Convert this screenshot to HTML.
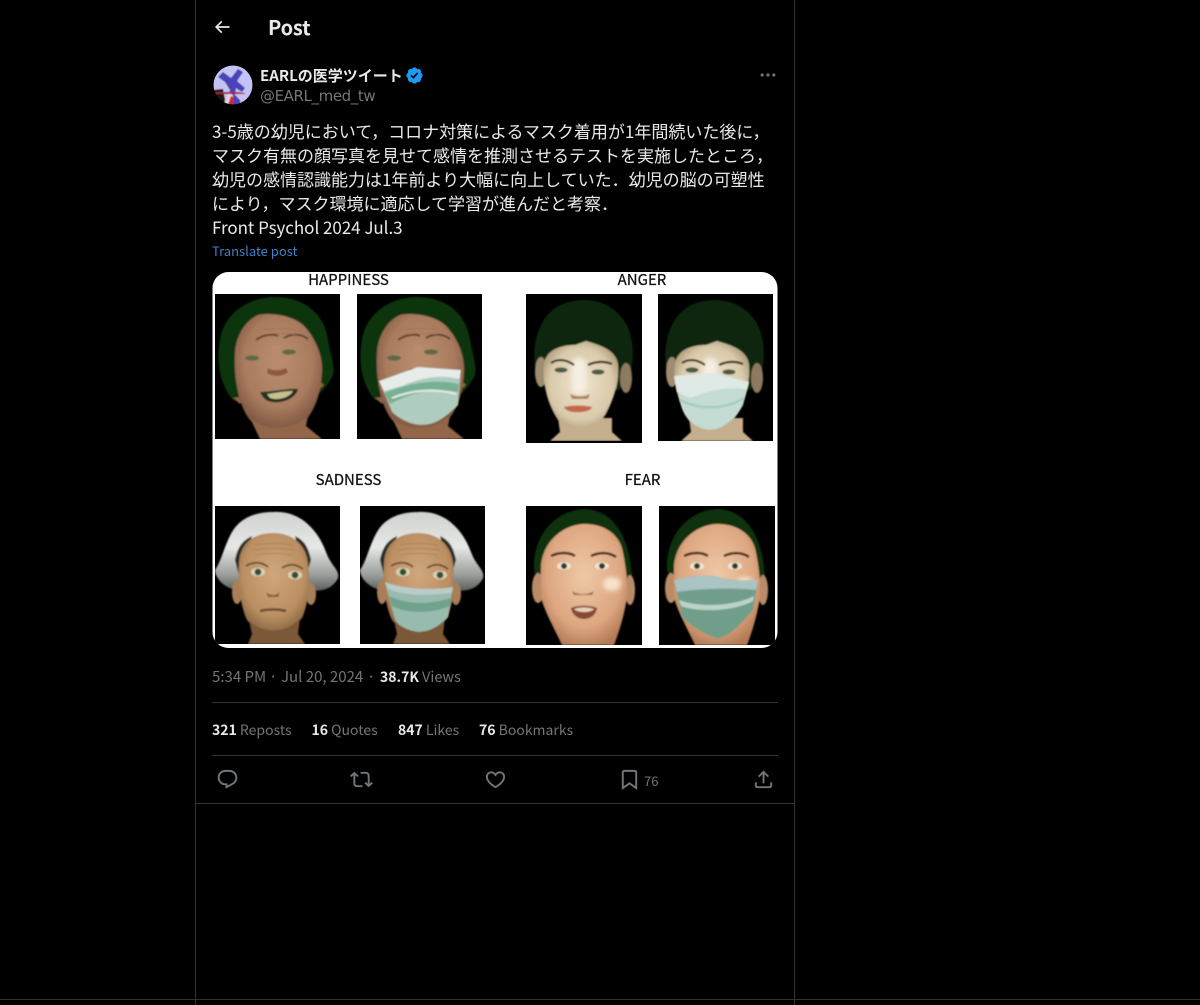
<!DOCTYPE html>
<html lang="ja"><head><meta charset="utf-8"><title>Post</title>
<style>
html,body{margin:0;padding:0;background:#000;}
body{width:1200px;height:1005px;position:relative;overflow:hidden;font-family:"Noto Sans CJK JP","Liberation Sans",sans-serif;color:#e7e9ea;}
.a{position:absolute;white-space:nowrap;}
.ln{position:absolute;background:#333;}
.t{left:212px;font-size:17px;line-height:24px;height:24px;color:#e7e9ea;}
.g{color:#71767b;}
b{font-weight:700;color:#e7e9ea;}
.s{font-size:14px;line-height:20px;top:720px;}
.m{font-size:15px;line-height:20px;top:667px;}
svg.i{position:absolute;fill:#71767b;}
</style></head><body>
<div class="ln" style="left:195px;top:0;width:1px;height:1005px"></div>
<div class="ln" style="left:794px;top:0;width:1px;height:1005px"></div>
<div class="ln" style="left:0;top:999px;width:1200px;height:1px"></div>
<div class="ln" style="left:196px;top:803px;width:598px;height:1px"></div>
<div class="ln" style="left:212px;top:702px;width:566px;height:1px"></div>
<div class="ln" style="left:212px;top:755px;width:566px;height:1px"></div>

<svg class="i" style="left:212px;top:17px;fill:#e7e9ea" width="20" height="20" viewBox="0 0 24 24"><path d="M7.414 13l5.043 5.04-1.414 1.42L3.586 12l7.457-7.46 1.414 1.42L7.414 11H21v2H7.414z"/></svg>
<div class="a" style="left:268px;top:13px;font-size:20px;line-height:28px;font-weight:700;color:#e7e9ea;letter-spacing:-.2px">Post</div>

<svg class="a" style="left:213px;top:65px" width="40" height="40" viewBox="0 0 40 40">
<defs><clipPath id="av"><circle cx="20" cy="20" r="19.5"/></clipPath><filter id="ab"><feGaussianBlur stdDeviation="0.6"/></filter></defs>
<g clip-path="url(#av)"><g filter="url(#ab)">
<rect width="40" height="40" fill="#c4c4f4"/>
<path d="M5 12l5-5 8 6 7-9 5 3-6 9 8 7-3 4-6-4-1 7 5 5 1 8H16l2-7-3-5 2-6-5-8z" fill="#4c43b8"/>
<path d="M0 25l10-1 3 16H0z" fill="#15151f"/>
<path d="M11 38l5-10 4 2-1 10z" fill="#e6d2d8"/>
<path d="M3 27l22 0 7 1v1H14L3 29z" fill="#a82038"/>
<path d="M15 40l3-9 3 2-1 7z" fill="#cc2a2e"/>
</g></g></svg>

<div class="a" style="left:260px;top:65px;font-size:15px;line-height:22px;font-weight:700;color:#e7e9ea">EARLの医学ツイート</div>
<svg class="a" style="left:405px;top:66px;fill:#1d9bf0" width="19" height="19" viewBox="0 0 22 22"><path d="M20.396 11c-.018-.646-.215-1.275-.57-1.816-.354-.54-.852-.972-1.438-1.246.223-.607.27-1.264.14-1.897-.131-.634-.437-1.218-.882-1.687-.47-.445-1.053-.75-1.687-.882-.633-.13-1.29-.083-1.897.14-.273-.587-.704-1.086-1.245-1.44S11.647 1.62 11 1.604c-.646.017-1.273.213-1.813.568s-.969.854-1.24 1.44c-.608-.223-1.267-.272-1.902-.14-.635.13-1.22.436-1.69.882-.445.47-.749 1.055-.878 1.688-.13.633-.08 1.29.144 1.896-.587.274-1.087.705-1.443 1.245-.356.54-.555 1.17-.574 1.817.02.647.218 1.276.574 1.817.356.54.856.972 1.443 1.245-.224.606-.274 1.263-.144 1.896.13.634.433 1.218.877 1.688.47.443 1.054.747 1.687.878.633.132 1.29.084 1.897-.136.274.586.705 1.084 1.246 1.439.54.354 1.17.551 1.816.569.647-.016 1.276-.213 1.817-.567s.972-.854 1.245-1.44c.604.239 1.266.296 1.903.164.636-.132 1.22-.447 1.68-.907.46-.46.776-1.044.908-1.681s.075-1.299-.165-1.903c.586-.274 1.084-.705 1.439-1.246.354-.54.551-1.17.569-1.816zM9.662 14.85l-3.429-3.428 1.293-1.302 2.072 2.072 4.4-4.794 1.347 1.246z"/></svg>
<div class="a g" style="left:260px;top:86px;font-size:15px;line-height:20px;font-family:'DejaVu Sans','Liberation Sans',sans-serif;letter-spacing:-.4px">@EARL_med_tw</div>
<svg class="i" style="left:758px;top:65px" width="20" height="20" viewBox="0 0 24 24"><path d="M3 12c0-1.1.9-2 2-2s2 .9 2 2-.9 2-2 2-2-.9-2-2zm9 2c1.1 0 2-.9 2-2s-.9-2-2-2-2 .9-2 2 .9 2 2 2zm7 0c1.1 0 2-.9 2-2s-.9-2-2-2-2 .9-2 2 .9 2 2 2z"/></svg>

<div class="a t" style="top:119px">3-5歳の幼児において，コロナ対策によるマスク着用が1年間続いた後に，</div>
<div class="a t" style="top:143px">マスク有無の顔写真を見せて感情を推測させるテストを実施したところ，</div>
<div class="a t" style="top:167px">幼児の感情認識能力は1年前より大幅に向上していた．幼児の脳の可塑性</div>
<div class="a t" style="top:191px">により，マスク環境に適応して学習が進んだと考察．</div>
<div class="a t" style="top:215px;letter-spacing:-.04px">Front Psychol 2024 Jul.3</div>
<div class="a" style="left:212px;top:242px;font-size:13px;line-height:18px;color:#4080c8">Translate post</div>

<svg class="a" style="left:212px;top:272px" width="566" height="377" viewBox="212 272 566 377">
<defs>
<clipPath id="c"><rect x="212.5" y="272" width="565" height="376" rx="16"/></clipPath>
<filter id="b" x="-5%" y="-5%" width="110%" height="110%"><feGaussianBlur stdDeviation="0.8"/></filter>
<filter id="b2" x="-40%" y="-40%" width="180%" height="180%"><feGaussianBlur stdDeviation="2.4"/></filter>
<radialGradient id="s1" cx="50%" cy="42%" r="60%"><stop offset="0" stop-color="#bb8f72"/><stop offset=".65" stop-color="#a97b5e"/><stop offset="1" stop-color="#7d5540"/></radialGradient>
<radialGradient id="s2" cx="50%" cy="50%" r="60%"><stop offset="0" stop-color="#efe4cd"/><stop offset=".7" stop-color="#d9caab"/><stop offset="1" stop-color="#a4906f"/></radialGradient>
<radialGradient id="s3" cx="50%" cy="42%" r="62%"><stop offset="0" stop-color="#d0a67c"/><stop offset=".7" stop-color="#bb8f62"/><stop offset="1" stop-color="#8a6642"/></radialGradient>
<radialGradient id="s4" cx="50%" cy="42%" r="62%"><stop offset="0" stop-color="#eec9a6"/><stop offset=".7" stop-color="#dda680"/><stop offset="1" stop-color="#b27a55"/></radialGradient>
<linearGradient id="hg" x1="0" y1="0" x2="0" y2="1"><stop offset="0" stop-color="#cfd2cf"/><stop offset=".45" stop-color="#e6e8e6"/><stop offset=".8" stop-color="#9a9e9a"/><stop offset="1" stop-color="#5b5f5b"/></linearGradient>
<clipPath id="p1"><rect x="215" y="294" width="125" height="145"/></clipPath>
<clipPath id="p2"><rect x="526" y="294" width="116" height="147"/></clipPath>
<clipPath id="p3"><rect x="215" y="506" width="125" height="138"/></clipPath>
<clipPath id="p4"><rect x="526" y="506" width="116" height="139"/></clipPath>

<g id="f1" filter="url(#b)">
<path d="M233 400C220 385 216 362 220 340C224 312 250 297 275 297C305 297 325 315 328 340C330 352 335 365 333 375C328 385 322 392 316 396Z" fill="#0d3410"/>
<path d="M233 398l7 6 6-8zM324 385l-8 7 2-12z" fill="#8f6047"/>
<path d="M235 352C236 335 246 320 258 315C272 312 296 316 306 328C316 340 323 356 322 372C321 392 316 408 306 420C292 432 262 432 250 420C240 408 233 380 235 352Z" fill="url(#s1)"/>
<path d="M250 418C262 430 290 432 308 416L306 426L322 439H260Z" fill="#93654a"/>
<path d="M256 340c8-6 18-6 22-4M284 338c8-5 18-4 24 1" stroke="#54382a" stroke-width="1.8" fill="none"/>
<path d="M262 330c10-2 26-2 34 0M262 335c10-2 26-2 34 0" stroke="#9a6e54" stroke-width=".8" fill="none"/>
<ellipse cx="252" cy="358" rx="7" ry="2.6" fill="#5c6a4a"/>
<ellipse cx="289" cy="352" rx="7" ry="2.6" fill="#5c6a4a"/>
<path d="M272 345l-2 20c-3 4-3 7 2 9 6 2 12 1 15-2 1-3-2-6-4-8l-2-19z" fill="#b98a6c"/>
<path d="M267 373c6 4 16 4 21-1l-2-4c-6 3-14 3-18 0z" fill="#8c583f"/>
<path d="M260 392C272 392 288 388 298 389C296 399 280 405 268 401C264 399 262 396 260 392Z" fill="#24331a"/>
<path d="M267 394c8-1 18-3 26-3c-3 6-14 10-23 7z" fill="#c8c18f"/>
</g>
<g id="f2" filter="url(#b)">
<path d="M537 376C532 358 533 336 545 318C556 303 572 300 585 300C605 300 622 312 629 330C634 345 634 360 630 376L619 390L552 390Z" fill="#082808"/>
<ellipse cx="541" cy="372" rx="6" ry="15" fill="#a08c70"/>
<ellipse cx="626" cy="378" rx="6" ry="15" fill="#8d7a60"/>
<path d="M558 418H612V432L622 441H550L560 432Z" fill="#c4ae8d"/>
<path d="M544 364C546 350 560 345 575 345L586 341C600 345 616 350 618 364C620 384 612 402 606 414C598 428 570 432 558 420C548 405 542 384 544 364Z" fill="url(#s2)"/>
<rect x="572" y="358" width="14" height="36" rx="7" fill="#f5efe2" filter="url(#b2)"/>
<path d="M551 363c8-5 16-3 23 2" stroke="#332719" stroke-width="2.2" fill="none"/>
<path d="M588 365c8-4 16-4 24-1" stroke="#332719" stroke-width="2.2" fill="none"/>
<ellipse cx="561" cy="370" rx="6.5" ry="2.6" fill="#4b5a42"/>
<ellipse cx="598" cy="372" rx="6.5" ry="2.6" fill="#4b5a42"/>
<path d="M570 394c6 3 14 3 20 0l-2 5h-16z" fill="#ad8565"/>
<path d="M564 407c8-2 20-2 28 0c0 6-26 8-28 0z" fill="#c4674e"/>
</g>
<g id="f3" filter="url(#b)">
<path d="M273 512C300 510 318 530 326 552C331 566 340 570 338 578C332 590 320 592 308 590H240C225 590 215 578 215 570C222 560 224 546 232 532C240 518 255 512 273 512Z" fill="url(#hg)"/>
<path d="M235 560C238 545 244 540 252 536L240 580ZM311 560C308 545 303 540 295 536L305 580Z" fill="#2a2a20"/>
<ellipse cx="237" cy="592" rx="5" ry="12" fill="#a87f58"/>
<ellipse cx="311" cy="594" rx="5" ry="11" fill="#a87f58"/>
<path d="M239 563C240 542 255 533 273 533C292 533 306 544 308 563C311 585 308 602 303 616C294 634 254 636 246 618C241 605 237 585 239 563Z" fill="url(#s3)"/>
<path d="M249 620C260 634 288 634 300 618L298 634L305 644H248L252 634Z" fill="#7a5838"/>
<path d="M255 545c12-2 26-2 38 0M253 550c14-2 28-2 42 0M255 555c12-2 26-2 38 0" stroke="#a07c58" stroke-width=".7" fill="none"/>
<path d="M246 566c8-5 16-4 22 1" stroke="#4a3626" stroke-width="1.5" fill="none"/>
<path d="M282 568c8-5 14-4 21 1" stroke="#4a3626" stroke-width="1.5" fill="none"/>
<ellipse cx="258" cy="572" rx="7" ry="4.4" fill="#dcd2b8"/><circle cx="258" cy="572" r="3.4" fill="#34502f"/>
<ellipse cx="295" cy="575" rx="7" ry="4.4" fill="#dcd2b8"/><circle cx="295" cy="575" r="3.4" fill="#34502f"/>
<path d="M266 592c4 4 10 4 14 0l-2 5h-10z" fill="#8a5a40"/>
<path d="M260 611c8-2 18-2 26 0" stroke="#6a4634" stroke-width="2.6" fill="none"/>
</g>
<g id="f4" filter="url(#b)">
<path d="M534 570C532 540 552 510 585 509C612 510 630 535 632 578L622 585L540 585Z" fill="#0c3010"/>
<ellipse cx="538" cy="588" rx="6" ry="15" fill="#b98b68"/>
<ellipse cx="630" cy="590" rx="5" ry="15" fill="#b98b68"/>
<path d="M541 566C543 540 565 524 585 524C604 524 618 534 622 548C626 565 628 585 627 598C624 615 620 630 614 645H562C554 628 545 612 541 598Z" fill="url(#s4)"/>
<ellipse cx="612" cy="584" rx="9" ry="7" fill="#f6e3cb" filter="url(#b2)"/>
<path d="M551 556c8-4 18-4 24 0" stroke="#432719" stroke-width="2.4" fill="none"/>
<path d="M591 556c8-4 18-4 25 1" stroke="#432719" stroke-width="2.4" fill="none"/>
<ellipse cx="564" cy="566" rx="7" ry="3.8" fill="#efe6d2"/><circle cx="564" cy="566" r="3" fill="#2c3a28"/>
<ellipse cx="602" cy="566" rx="7" ry="3.8" fill="#efe6d2"/><circle cx="602" cy="566" r="3" fill="#2c3a28"/>
<path d="M572 591c5 4 17 4 22 0l-2 4h-18z" fill="#a26644"/>
<path d="M571 608c6-3 20-3 26 0c-1 8-8 11-13 11c-6 0-12-4-13-11z" fill="#8a4a34"/>
<path d="M574 609c6-2 14-2 20 0c-3 4-16 4-20 0z" fill="#e6d3be"/>
</g>
</defs>
<g clip-path="url(#c)">
<rect x="212" y="272" width="566" height="376" fill="#fff"/>
<g fill="#000">
<rect x="215" y="294" width="125" height="145"/><rect x="357" y="294" width="125" height="145"/>
<rect x="526" y="294" width="116" height="149"/><rect x="658" y="294" width="115" height="147"/>
<rect x="215" y="506" width="125" height="138"/><rect x="360" y="506" width="125" height="138"/>
<rect x="526" y="506" width="116" height="139"/><rect x="659" y="506" width="116" height="139"/>
</g>
<g clip-path="url(#p1)"><use href="#f1"/></g>
<g transform="translate(142 0)"><g clip-path="url(#p1)"><use href="#f1"/></g></g>
<g filter="url(#b)">
<path d="M379 381L418 367L461 370L458 405C445 418 435 425 422 425C410 425 398 418 392 412Z" fill="#aecdbf"/>
<path d="M379 381L418 367L461 370L459 379C440 374 420 378 402 386L384 391Z" fill="#e6ecea"/>
<path d="M384 393C405 384 435 378 459 384L458 392C435 388 412 392 390 404Z" fill="#78b094"/>
<path d="M392 398C412 390 435 388 456 394" stroke="#e4ece8" stroke-width="2" fill="none"/>
</g>
<g clip-path="url(#p2)"><use href="#f2"/></g>
<g transform="translate(131 0)"><g clip-path="url(#p2)"><use href="#f2"/></g></g>
<g filter="url(#b)">
<path d="M674 376L712 373L749 382L743 405C735 420 722 430 708 430C696 428 686 420 682 408Z" fill="#c4dcd3"/>
<path d="M674 376L712 373L749 382L747 389C725 386 705 392 690 398L677 392Z" fill="#dfe9e6"/>
<path d="M680 400C700 410 725 410 744 398" stroke="#a6ccbc" stroke-width="2.5" fill="none"/>
</g>
<g clip-path="url(#p3)"><use href="#f3"/></g>
<g transform="translate(145 0)"><g clip-path="url(#p3)"><use href="#f3"/></g></g>
<g filter="url(#b)">
<path d="M385 582C405 590 435 590 453 587L448 617C438 628 428 632 418 632C405 630 398 625 395 620Z" fill="#97bbae"/>
<path d="M385 582C405 590 435 590 453 587L452 593C430 595 410 597 388 589Z" fill="#b9ccca"/>
<path d="M389 596C410 606 432 604 451 598L450 606C430 614 408 614 392 606Z" fill="#6fa28c"/>
</g>
<g clip-path="url(#p4)"><use href="#f4"/></g>
<g transform="translate(133 0)"><g clip-path="url(#p4)"><use href="#f4"/></g></g>
<g filter="url(#b)">
<path d="M674 580C695 576 700 574 718 577C735 582 745 580 758 580L753 610C740 625 728 638 717 638C705 635 690 625 682 617Z" fill="#719e8b"/>
<path d="M674 580C695 576 700 574 718 577C735 582 745 580 758 580L756 590C735 588 705 588 677 592Z" fill="#a9c4c2"/>
<path d="M679 600C700 608 735 606 754 596L753 601C735 611 700 613 681 606Z" fill="#bcd3c8"/>
</g>
<g font-family="'Noto Sans CJK JP','Liberation Sans',sans-serif" font-size="15" fill="#111" stroke="#111" stroke-width=".25" text-anchor="middle">
<text x="348.5" y="285">HAPPINESS</text>
<text x="642" y="285">ANGER</text>
<text x="348.5" y="485">SADNESS</text>
<text x="642.5" y="485">FEAR</text>
</g>
</g>
</svg>

<div class="a g m" style="left:212px">5:34 PM</div>
<div class="a g m" style="left:269px">·</div>
<div class="a g m" style="left:281px">Jul 20, 2024</div>
<div class="a g m" style="left:367px">·</div>
<div class="a g m" style="left:380px;font-size:14px"><b>38.7K</b></div>
<div class="a g m" style="left:422px;font-size:14.5px">Views</div>
<div class="a g s" style="left:212px"><b>321</b> Reposts</div>
<div class="a g s" style="left:311.5px"><b>16</b> Quotes</div>
<div class="a g s" style="left:398px"><b>847</b> Likes</div>
<div class="a g s" style="left:479px"><b>76</b> Bookmarks</div>

<svg class="i" style="left:216px;top:768px" width="23" height="23" viewBox="0 0 24 24"><path d="M1.751 10c0-4.42 3.584-8 8.005-8h4.366c4.49 0 8.129 3.64 8.129 8.13 0 2.96-1.607 5.68-4.196 7.11l-8.054 4.46v-3.69h-.067c-4.49.1-8.183-3.51-8.183-8.01zm8.005-6c-3.317 0-6.005 2.69-6.005 6 0 3.37 2.77 6.08 6.138 6.01l.351-.01h1.761v2.3l5.087-2.81c1.951-1.08 3.163-3.13 3.163-5.36 0-3.39-2.744-6.13-6.129-6.13H9.756z"/></svg>
<svg class="i" style="left:350px;top:768px" width="23" height="23" viewBox="0 0 24 24"><path d="M4.5 3.88l4.432 4.14-1.364 1.46L5.5 7.55V16c0 1.1.896 2 2 2H13v2H7.5c-2.209 0-4-1.79-4-4V7.55L1.432 9.48.068 8.02 4.5 3.88zM16.5 6H11V4h5.5c2.209 0 4 1.79 4 4v8.45l2.068-1.93 1.364 1.46-4.432 4.14-4.432-4.14 1.364-1.46 2.068 1.93V8c0-1.1-.896-2-2-2z"/></svg>
<svg class="i" style="left:484px;top:768px" width="23" height="23" viewBox="0 0 24 24"><path d="M16.697 5.5c-1.222-.06-2.679.51-3.89 2.16l-.805 1.09-.806-1.09C9.984 6.01 8.526 5.44 7.304 5.5c-1.243.07-2.349.78-2.91 1.91-.552 1.12-.633 2.78.479 4.82 1.074 1.97 3.257 4.27 7.129 6.61 3.87-2.34 6.052-4.64 7.126-6.61 1.111-2.04 1.03-3.7.477-4.82-.561-1.13-1.666-1.84-2.908-1.91zm4.187 7.69c-1.351 2.48-4.001 5.12-8.379 7.67l-.503.3-.504-.3c-4.379-2.55-7.029-5.19-8.382-7.67-1.36-2.5-1.41-4.86-.514-6.67.887-1.79 2.647-2.91 4.601-3.01 1.651-.09 3.368.56 4.798 2.01 1.429-1.45 3.146-2.1 4.796-2.01 1.954.1 3.714 1.22 4.601 3.01.896 1.81.846 4.17-.514 6.67z"/></svg>
<svg class="i" style="left:618px;top:768px" width="23" height="23" viewBox="0 0 24 24"><path d="M4 4.5C4 3.12 5.119 2 6.5 2h11C18.881 2 20 3.12 20 4.5v18.44l-8-5.71-8 5.71V4.5zM6.5 4c-.276 0-.5.22-.5.5v14.56l6-4.29 6 4.29V4.5c0-.28-.224-.5-.5-.5h-11z"/></svg>
<div class="a g" style="left:644px;top:772px;font-size:13px;line-height:18px">76</div>
<svg class="i" style="left:752px;top:768px" width="23" height="23" viewBox="0 0 24 24"><path d="M12 2.59l5.7 5.7-1.41 1.42L13 6.41V16h-2V6.41l-3.3 3.3-1.41-1.42L12 2.59zM21 15l-.02 3.51c0 1.38-1.12 2.49-2.5 2.49H5.5C4.11 21 3 19.88 3 18.5V15h2v3.5c0 .28.22.5.5.5h12.98c.28 0 .5-.22.5-.5L19 15h2z"/></svg>
</body></html>
